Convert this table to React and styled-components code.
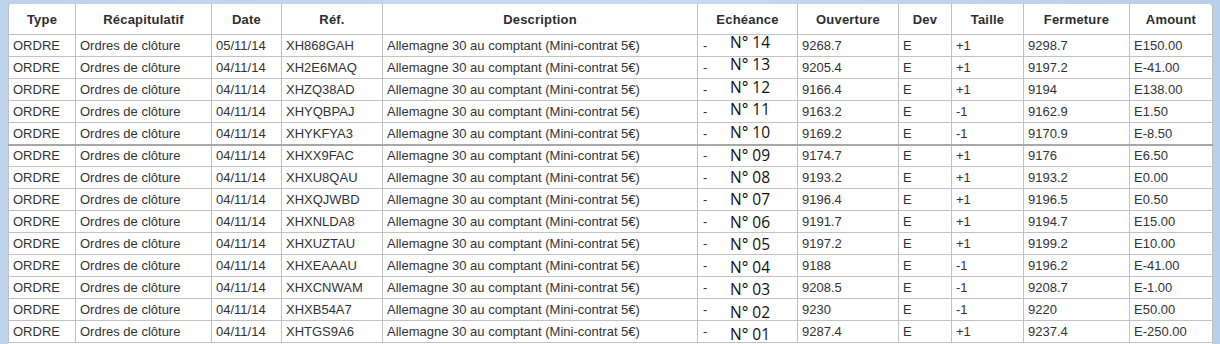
import React from "react";
import styled, { createGlobalStyle } from "styled-components";

const GlobalStyle = createGlobalStyle`
  html, body {
    margin: 0;
    padding: 0;
    background: #c4d8ef;
    font-family: "Liberation Sans", Arial, sans-serif;
  }
`;

const Frame = styled.div`
  width: 1220px;
  height: 344px;
  overflow: hidden;
  box-sizing: border-box;
  padding: 4px 8px 0 8px;
  background: linear-gradient(to right, #bdd3ec 0%, #c6daf0 50%, #b9d0ea 100%);
`;

const Panel = styled.div`
  background: #ffffff;
  border-top-left-radius: 4px;
  border-top-right-radius: 4px;
  height: 100%;
`;

const Table = styled.table`
  width: 1204px;
  border-collapse: collapse;
  table-layout: fixed;
  color: #333;
`;

const HeadCell = styled.th`
  height: 30px;
  padding: 0;
  border: 1px solid #c2c2c2;
  border-top: none;
  font-size: 13px;
  font-weight: bold;
  letter-spacing: 0.2px;
  text-align: center;
  color: #2e2e2e;
`;

const Row = styled.tr`
  height: 22px;
  border-top: ${(p) => (p.$split ? "2px solid #a8a8a8" : "1px solid #c2c2c2")};
`;

const Cell = styled.td`
  padding: 1px 4px 0 4px;
  height: 21px;
  box-sizing: border-box;
  border: 1px solid #c2c2c2;
  border-top: none;
  font-size: 13px;
  line-height: 16px;
  white-space: nowrap;
  overflow: hidden;
  vertical-align: middle;
`;

const EcheanceCell = styled.td`
  padding: 0 0 0 5px;
  height: 21px;
  box-sizing: border-box;
  border: 1px solid #c2c2c2;
  border-top: none;
  white-space: nowrap;
  overflow: visible;
  line-height: 16px;
`;

const Dash = styled.span`
  display: inline-block;
  width: 27px;
  font-size: 13px;
  vertical-align: middle;
`;

const Number = styled.span`
  display: inline-block;
  font-family: "Open Sans", "Liberation Sans", sans-serif;
  font-size: 15.5px;
  line-height: 15px;
  color: #111;
  vertical-align: middle;
  transform: translateY(${(p) => p.$shift}px);
`;

const columns = [
  ["Type", 67],
  ["Récapitulatif", 136],
  ["Date", 70],
  ["Réf.", 101],
  ["Description", 315],
  ["Echéance", 100],
  ["Ouverture", 101],
  ["Dev", 53],
  ["Taille", 72],
  ["Fermeture", 106],
  ["Amount", 83],
];

const rows = [
  ["05/11/14", "XH868GAH", "14", "9268.7", "+1", "9298.7", "E150.00"],
  ["04/11/14", "XH2E6MAQ", "13", "9205.4", "+1", "9197.2", "E-41.00"],
  ["04/11/14", "XHZQ38AD", "12", "9166.4", "+1", "9194", "E138.00"],
  ["04/11/14", "XHYQBPAJ", "11", "9163.2", "-1", "9162.9", "E1.50"],
  ["04/11/14", "XHYKFYA3", "10", "9169.2", "-1", "9170.9", "E-8.50"],
  ["04/11/14", "XHXX9FAC", "09", "9174.7", "+1", "9176", "E6.50"],
  ["04/11/14", "XHXU8QAU", "08", "9193.2", "+1", "9193.2", "E0.00"],
  ["04/11/14", "XHXQJWBD", "07", "9196.4", "+1", "9196.5", "E0.50"],
  ["04/11/14", "XHXNLDA8", "06", "9191.7", "+1", "9194.7", "E15.00"],
  ["04/11/14", "XHXUZTAU", "05", "9197.2", "+1", "9199.2", "E10.00"],
  ["04/11/14", "XHXEAAAU", "04", "9188", "-1", "9196.2", "E-41.00"],
  ["04/11/14", "XHXCNWAM", "03", "9208.5", "-1", "9208.7", "E-1.00"],
  ["04/11/14", "XHXB54A7", "02", "9230", "-1", "9220", "E50.00"],
  ["04/11/14", "XHTGS9A6", "01", "9287.4", "+1", "9237.4", "E-250.00"],
];

export default function App() {
  return (
    <>
      <GlobalStyle />
      <Frame>
        <Panel>
          <Table>
            <colgroup>
              {columns.map(([name, w]) => (
                <col key={name} style={{ width: w }} />
              ))}
            </colgroup>
            <thead>
              <tr>
                {columns.map(([name]) => (
                  <HeadCell key={name}>{name}</HeadCell>
                ))}
              </tr>
            </thead>
            <tbody>
              {rows.map((r, i) => (
                <Row key={r[1]} $split={i === 5}>
                  <Cell>ORDRE</Cell>
                  <Cell>Ordres de clôture</Cell>
                  <Cell>{r[0]}</Cell>
                  <Cell>{r[1]}</Cell>
                  <Cell>Allemagne 30 au comptant (Mini-contrat 5€)</Cell>
                  <EcheanceCell>
                    <Dash>-</Dash>
                    <Number $shift={Math.round(-3 + (i * 6) / 13)}>N° {r[2]}</Number>
                  </EcheanceCell>
                  <Cell>{r[3]}</Cell>
                  <Cell>E</Cell>
                  <Cell>{r[4]}</Cell>
                  <Cell>{r[5]}</Cell>
                  <Cell>{r[6]}</Cell>
                </Row>
              ))}
            </tbody>
          </Table>
        </Panel>
      </Frame>
    </>
  );
}
